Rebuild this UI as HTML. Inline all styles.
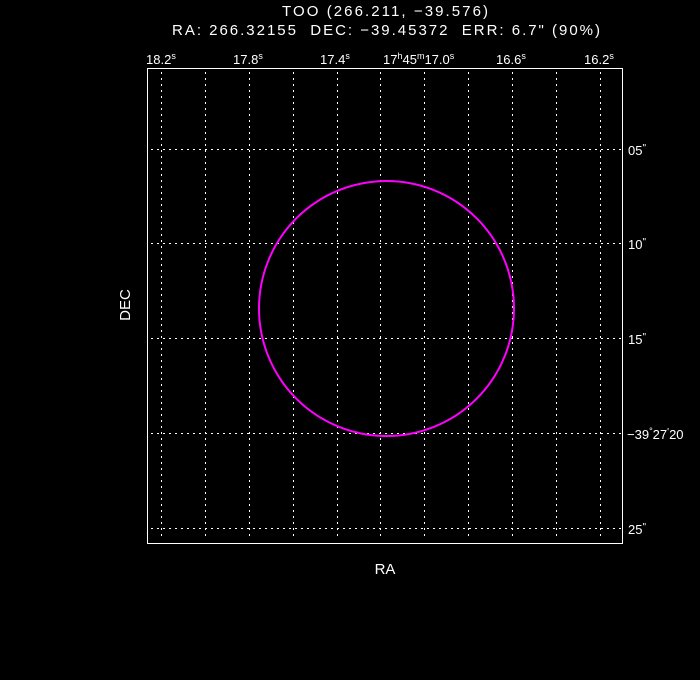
<!DOCTYPE html>
<html><head><meta charset="utf-8"><style>
html,body{margin:0;padding:0;background:#000;width:700px;height:680px;overflow:hidden}
svg{display:block}
text{font-family:"Liberation Sans",sans-serif;fill:#fff}
</style></head><body>
<svg width="700" height="680" viewBox="0 0 700 680" xmlns="http://www.w3.org/2000/svg">
<text x="282" y="16" font-size="15" textLength="206" lengthAdjust="spacing">TOO (266.211, −39.576)</text>
<text x="172" y="35" font-size="15" textLength="428" lengthAdjust="spacing" xml:space="preserve">RA: 266.32155  DEC: −39.45372  ERR: 6.7" (90%)</text>
<g font-size="13">
<text x="146" y="64">18.2<tspan font-size="9" dy="-5">s</tspan></text>
<text x="233" y="64">17.8<tspan font-size="9" dy="-5">s</tspan></text>
<text x="320" y="64">17.4<tspan font-size="9" dy="-5">s</tspan></text>
<text x="383" y="64">17<tspan font-size="9" dy="-5">h</tspan><tspan dy="5">45</tspan><tspan font-size="9" dy="-5">m</tspan><tspan dy="5">17.0</tspan><tspan font-size="9" dy="-5">s</tspan></text>
<text x="496" y="64">16.6<tspan font-size="9" dy="-5">s</tspan></text>
<text x="584" y="64">16.2<tspan font-size="9" dy="-5">s</tspan></text>
<text x="628" y="155">05<tspan font-size="10" dy="-4">"</tspan></text>
<text x="628" y="249">10<tspan font-size="10" dy="-4">"</tspan></text>
<text x="628" y="344">15<tspan font-size="10" dy="-4">"</tspan></text>
<text x="627" y="439">−39<tspan font-size="9" dy="-5">°</tspan><tspan dy="5">27</tspan><tspan font-size="10" dy="-4">'</tspan><tspan dy="4">20</tspan></text>
<text x="628" y="534">25<tspan font-size="10" dy="-4">"</tspan></text>
</g>
<text x="385" y="574" font-size="15" text-anchor="middle">RA</text>
<text x="0" y="0" font-size="15" text-anchor="middle" transform="translate(130,305) rotate(-90)">DEC</text>
<g stroke="#fff" stroke-width="1" stroke-dasharray="2,4" fill="none">
<line x1="161.5" y1="72" x2="161.5" y2="538"/>
<line x1="205.5" y1="72" x2="205.5" y2="538"/>
<line x1="249.5" y1="72" x2="249.5" y2="538"/>
<line x1="293.5" y1="72" x2="293.5" y2="538"/>
<line x1="337.5" y1="72" x2="337.5" y2="538"/>
<line x1="380.5" y1="72" x2="380.5" y2="538"/>
<line x1="424.5" y1="72" x2="424.5" y2="538"/>
<line x1="468.5" y1="72" x2="468.5" y2="538"/>
<line x1="512.5" y1="72" x2="512.5" y2="538"/>
<line x1="556.5" y1="72" x2="556.5" y2="538"/>
<line x1="600.5" y1="72" x2="600.5" y2="538"/>
<line x1="151" y1="149.5" x2="622" y2="149.5"/>
<line x1="151" y1="243.5" x2="622" y2="243.5"/>
<line x1="151" y1="338.5" x2="622" y2="338.5"/>
<line x1="151" y1="433.5" x2="622" y2="433.5"/>
<line x1="151" y1="528.5" x2="622" y2="528.5"/>
</g>
<rect x="147.5" y="68.5" width="475" height="475" fill="none" stroke="#fff" stroke-width="1"/>
<circle cx="386.5" cy="308.5" r="127.5" fill="none" stroke="#ff00ff" stroke-width="2"/>
</svg>
</body></html>
